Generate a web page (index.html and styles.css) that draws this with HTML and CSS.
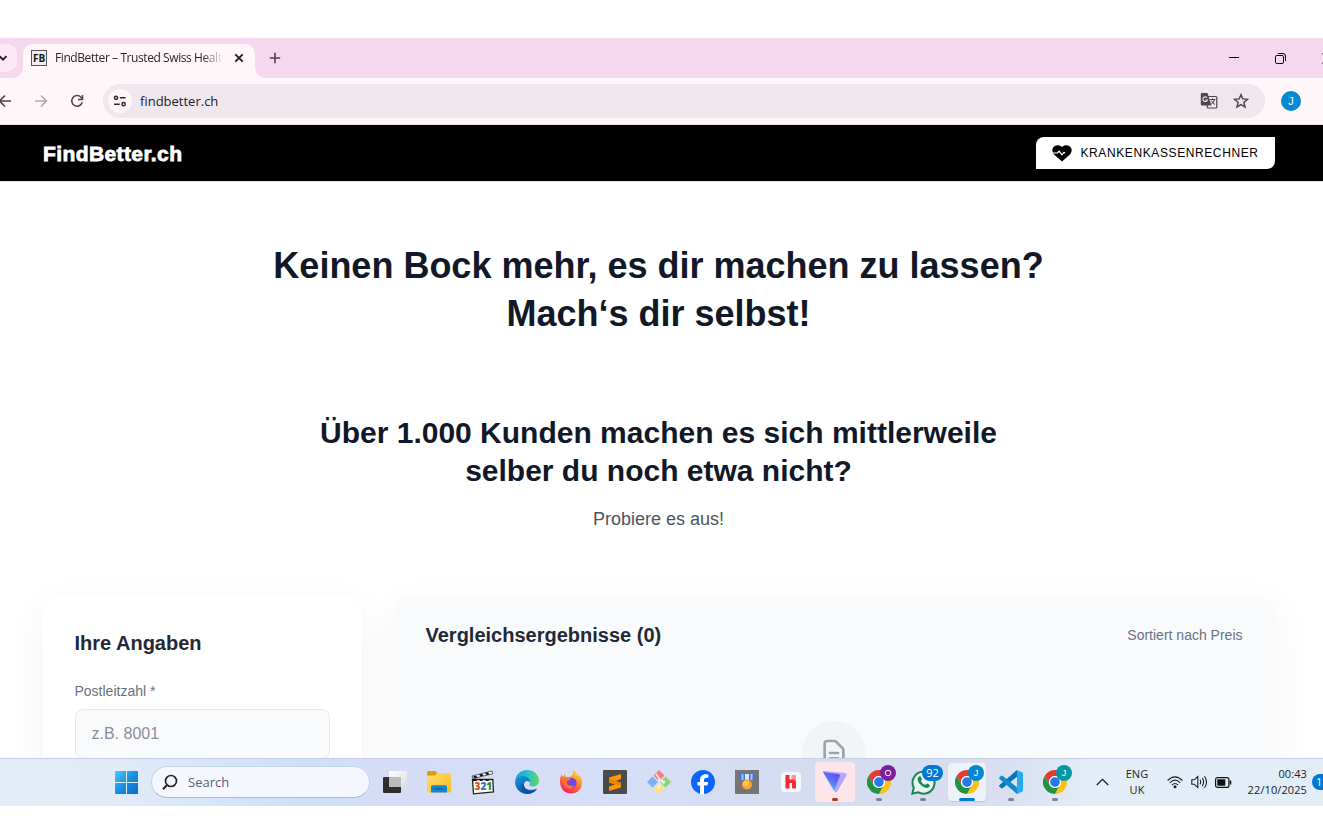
FILE: index.html
```html
<!DOCTYPE html>
<html lang="de">
<head>
<meta charset="utf-8">
<title>FindBetter – Trusted Swiss Health</title>
<link rel="stylesheet" href="styles.css">
</head>
<body>
<svg class="defs" width="0" height="0">
  <symbol id="chrome" viewBox="0 0 24 24">
    <path fill="#e33b2e" d="M1.6 6A12 12 0 0 1 22.4 6H12A6 6 0 0 0 6.8 15Z"/>
    <path fill="#229342" d="M1.6 6A12 12 0 0 0 12 24L17.2 15A6 6 0 0 1 6.8 15Z"/>
    <path fill="#fbc116" d="M12 24A12 12 0 0 0 22.4 6H12A6 6 0 0 1 17.2 15Z"/>
    <circle cx="12" cy="12" r="6" fill="#fff"/><circle cx="12" cy="12" r="4.8" fill="#2a78e8"/>
  </symbol>
</svg>
<div class="tabstrip">
  <div class="tab-search"><svg width="10" height="10" viewBox="0 0 10 10"><path d="M1.5 3.2 5 6.7l3.5-3.5" fill="none" stroke="#1f1a1f" stroke-width="1.8"/></svg></div>
  <div class="tab">
    <span class="favicon">FB</span>
    <span class="tab-title">FindBetter – Trusted Swiss Healt</span>
    <svg class="tab-close" width="10" height="10" viewBox="0 0 10 10"><path d="m1.3 1.3 7.4 7.4m0-7.4L1.3 8.7" stroke="#1f1a1f" stroke-width="1.8"/></svg>
  </div>
  <svg class="new-tab" width="12" height="12" viewBox="0 0 12 12"><path d="M6 .8v10.4M.8 6h10.4" stroke="#50404e" stroke-width="1.6"/></svg>
  <div class="window-buttons">
    <svg width="10" height="10" viewBox="0 0 10 10"><path d="M0 4.500h10" stroke="#000"/></svg>
    <svg width="11" height="11" viewBox="0 0 11 11"><rect x=".5" y="2.500" width="8" height="8" rx="1.300" fill="none" stroke="#000"/><path d="M2.800.5H8A2.500 2.500 0 0 1 10.500 3v5" fill="none" stroke="#000"/></svg>
    <svg width="11" height="11" viewBox="0 0 11 11"><path d="m.5.5 10 10m0-10-10 10" stroke="#000" stroke-width="1.100"/></svg>
  </div>
</div>
<div class="toolbar">
  <svg class="nav-back" width="14" height="14" viewBox="0 0 14 14"><path d="M13 7H2M7 1.500 1.500 7 7 12.500" fill="none" stroke="#57424f" stroke-width="1.600"/></svg>
  <svg class="nav-forward" width="14" height="14" viewBox="0 0 14 14"><path d="M1 7h11M7 1.500 12.500 7 7 12.500" fill="none" stroke="#b3a5ae" stroke-width="1.500"/></svg>
  <svg class="nav-reload" width="14" height="14" viewBox="0 0 14 14"><path d="M12.200 8.200A5.300 5.300 0 1 1 11 3.300L12.400 4.800" fill="none" stroke="#57424f" stroke-width="1.600"/><path d="M12.500 1v4.500H8" fill="none" stroke="#57424f" stroke-width="1.600"/></svg>
  <div class="omnibox">
    <span class="site-info"><svg width="14" height="12" viewBox="0 0 14 12"><g fill="none" stroke="#2d2630" stroke-width="1.500"><circle cx="3" cy="2.800" r="1.600"/><path d="M6.800 2.800H12.500M1 9.200h5.700"/><circle cx="10.600" cy="9.200" r="1.600"/></g></svg></span>
    <span class="url">findbetter.ch</span>
    <svg class="translate" width="18" height="18" viewBox="0 0 18 18"><rect x="7.200" y="4.500" width="9.600" height="11.500" rx="1" fill="none" stroke="#51454f" stroke-width="1.200"/><path d="M2 1h5.500L11.500 13.500H2A1.200 1.200 0 0 1 .8 12.300V2.200A1.200 1.200 0 0 1 2 1Z" fill="#51454f"/><path d="M7 5.700A2.300 2.300 0 1 0 7.400 8H5.400" fill="none" stroke="#f0e6ee" stroke-width="1.100"/><path d="M10 7.500h5.500M12.700 6.300v1.200M14.500 7.500q-.8 3-3.200 4.800M11.500 8.800q1 2.300 3.500 3.800" fill="none" stroke="#51454f"/></svg>
    <svg class="star" width="16" height="16" viewBox="0 0 16 16"><path d="m8 1.700 1.800 4.200 4.700.4-3.600 3.100 1.100 4.500L8 11.500l-4 2.400 1.100-4.500L1.500 6.300l4.700-.4Z" fill="none" stroke="#51454f" stroke-width="1.500"/></svg>
  </div>
  <span class="profile">J</span>
</div>
<header class="site-header">
  <span class="brand">FindBetter.ch</span>
  <span class="calculator">
    <svg width="20" height="17" viewBox="0 0 20 17"><path d="M10 16.500 2 9.500Q-.9 5.700 1.200 2.500C3.300-.3 7.500-.4 10 2 12.500-.4 16.700-.3 18.800 2.500Q20.900 5.700 18 9.500Z" fill="#000"/><path d="M0 8h5.200L7.200 6.200 10 9.800l1.700-2.100h1.500" fill="none" stroke="#fff" stroke-width="1.200"/></svg>
    KRANKENKASSENRECHNER
  </span>
</header>
<main class="page">
  <h1>Keinen Bock mehr, es dir machen zu lassen?<br>Mach‘s dir selbst!</h1>
  <h2>Über 1.000 Kunden machen es sich mittlerweile<br>selber du noch etwa nicht?</h2>
  <p class="lead">Probiere es aus!</p>
  <div class="columns">
    <section class="card form-card">
      <h3>Ihre Angaben</h3>
      <label>Postleitzahl *</label>
      <div class="field">z.B. 8001</div>
    </section>
    <section class="card results-card">
      <div class="results-head"><h3>Vergleichsergebnisse (0)</h3><span>Sortiert nach Preis</span></div>
      <div class="empty-icon"><svg width="32" height="32" viewBox="0 0 24 24" fill="none" stroke="#9ca3af" stroke-width="2" stroke-linecap="round" stroke-linejoin="round"><path d="M9 12h6m-6 4h6m2 5H7a2 2 0 0 1-2-2V5a2 2 0 0 1 2-2h5.586a1 1 0 0 1 .707.293l5.414 5.414a1 1 0 0 1 .293.707V19a2 2 0 0 1-2 2z"/></svg></div>
    </section>
  </div>
</main>
<div class="taskbar">
  <svg class="start" width="24" height="24" viewBox="0 0 24 24"><defs><linearGradient id="win" gradientUnits="userSpaceOnUse" x2="22" y2="22"><stop stop-color="#50d3fb"/><stop offset=".55" stop-color="#1a91e0"/><stop offset="1" stop-color="#0871cd"/></linearGradient></defs><path fill="url(#win)" d="M1.500 1H12v11H1V1.500ZM13 1h10.500l.5.500V12H13ZM1 13h11v11H1.500L1 23.500ZM13 13h11v10.500l-.5.500H13Z"/></svg>
  <div class="search"><svg width="16" height="17" viewBox="0 0 16 17"><circle cx="9" cy="7" r="5.500" fill="none" stroke="#25262b" stroke-width="1.700"/><path d="m5 11-4 4.300" stroke="#25262b" stroke-width="2"/></svg>Search</div>
  <div class="apps">
    <div class="app"><svg width="24" height="24" viewBox="0 0 24 24"><defs><linearGradient id="tv" x2="1" y2="1"><stop stop-color="#fff"/><stop offset="1" stop-color="#ddd"/></linearGradient></defs><rect y="7" width="18" height="16" rx="1" fill="#2e2e2e"/><rect x="6" y="1" width="18" height="16" rx="1" fill="url(#tv)"/><path d="M6 7h12v10H7l-1-1Z" fill="#b9bbbd"/></svg></div>
    <div class="app"><svg width="24" height="24" viewBox="0 0 24 24"><defs><linearGradient id="folder" x2="1" y2="1"><stop stop-color="#ffdf70"/><stop offset="1" stop-color="#f9b920"/></linearGradient></defs><path d="M0 2.500Q0 1 1.500 1H8l2.500 2L8 6H0Z" fill="#d99b08"/><path d="M0 5.500h8L11 3h11.500Q24 3 24 4.500V21q0 1.500-1.500 1.500h-21Q0 22.500 0 21Z" fill="url(#folder)"/><path d="M4 22.500V17q0-1.700 1.700-1.700h12.600Q20 15.300 20 17v5.500Z" fill="#1684d4"/><path d="M8 18.800h8" stroke="#0961aa" stroke-width="1.300"/></svg></div>
    <div class="app"><svg width="24" height="25" viewBox="0 0 24 25"><path d="M1.500 9.500h20.300L22.500 22l-20 1.800Z" fill="#fffef5" stroke="#222" stroke-width="1.300"/><path d="m1 6 20-5 .7 2.800L2 8.500Z" fill="#fff" stroke="#222" stroke-width=".7"/><path d="m2 6.500 3-1 1.500 2-3 .7ZM8 4.500l3-.8 1.500 2-3 .7ZM14 3l3-.8 1.500 2-3 .7ZM2 9h3l1 2H2ZM8 9h3l1 2H9ZM14 9h3l1 2h-3Z" fill="#111"/><g font-family="Open Sans,sans-serif" font-size="10" font-weight="800"><text x="3.500" y="20" fill="#db4b16">3</text><text x="9.400" y="20" fill="#2475c8">2</text><text x="15.200" y="20" fill="#278832">1</text></g></svg></div>
    <div class="app"><svg width="24" height="24" viewBox="0 0 24 24"><defs><linearGradient id="edgeTop" x2="1"><stop stop-color="#1b9de2"/><stop offset=".55" stop-color="#2bc3c9"/><stop offset="1" stop-color="#62d957"/></linearGradient><linearGradient id="edgeBlue" x2=".5" y2="1"><stop stop-color="#149bdc"/><stop offset="1" stop-color="#0b55a8"/></linearGradient></defs><path d="M.2 11C1 4 6 0 12 0c7 0 12 4.800 12 10.500 0 4-3 6-6.200 6-3 0-4-1-3.300-2.200 2-3-.5-6.300-4.500-6.300C5 8 1.500 9 .2 11Z" fill="url(#edgeTop)"/><path d="M.2 11C2 6 7.500 4.800 11 6.500c3 1.200 4.500 4 4 6-2-3-6-1.500-6 2 0 5 6.500 8 13 4.200C19.500 22.500 16 24 12 24 5 24-.6 18 .2 11Z" fill="url(#edgeBlue)"/><path d="M9 12.500c-2 6.500 5 9 13 6.200C19 23 15 24 12 24 6 22 4.500 16 9 12.500Z" fill="#104a9c" opacity=".65"/></svg></div>
    <div class="app"><svg width="24" height="24" viewBox="0 0 24 24"><defs><linearGradient id="fire" x1=".8" x2=".3" y2="1"><stop stop-color="#ffe132"/><stop offset=".45" stop-color="#ff8a28"/><stop offset="1" stop-color="#f21b69"/></linearGradient></defs><path d="M2.300 4.500 4 7l2-3 .5 3H10l3.500-2L14 0c3 1.500 4.500 3.500 5 6l1.300-1.500C26 13 22 23.500 12 23.500 3 23.500-1.500 14 2.300 4.500Z" fill="url(#fire)"/><circle cx="12.500" cy="13" r="5.200" fill="#7547db"/><path d="M4 8.500q4-2.500 8 .8l-3 1.500q-2 .7-1 3 2 3 7 1.700-2 4.500-7 2.500-5-2.500-4-9.500" fill="#ff712d"/></svg></div>
    <div class="app"><svg width="24" height="24" viewBox="0 0 24 24"><rect width="24" height="24" rx="1" fill="#4b4b49"/><path d="M18 4v5L12.500 11 18 12.700v4.800L6 21v-4.500l6-2-6-2V7.500Z" fill="#ff9800"/><path d="m6 8.500 12 4.200v3L6 12.500Z" fill="#e88400"/></svg></div>
    <div class="app"><svg width="24" height="24" viewBox="0 0 24 24"><path d="m12 0 5.500 5.500L12 11 6.500 5.500Z" fill="#ff7d7d"/><path d="m18.500 6.500 5.500 5.500-5.500 5.500L13 12Z" fill="#8bd66a"/><path d="m12 13 5.500 5.500L12 24l-5.500-5.500Z" fill="#ffe279"/><path d="M5.500 6.500 11 12l-5.500 5.500L0 12Z" fill="#7db0fc"/><path d="m9 4 3 4v9m0-8 4 3" fill="none" stroke="#eee" stroke-width="1.600"/><circle cx="12" cy="17" r="1.800" fill="#eee"/><circle cx="16.500" cy="12" r="1.800" fill="#eee"/></svg></div>
    <div class="app"><svg width="24" height="24" viewBox="0 0 24 24"><circle cx="12" cy="12" r="12" fill="#0866ff"/><path d="M9 24v-8.500H6.500V12H9v-1.500C9 6.300 11 4.200 14.700 4.200q1.500 0 2.700.4v3.200h-1.800c-2 0-2.600.8-2.600 2.700V12h4.200l-.8 3.500H13V24Z" fill="#fff"/></svg></div>
    <div class="app"><svg width="24" height="24" viewBox="0 0 24 24"><path fill="#747574" d="M0 0h24v24H0z"/><path d="M4.500 4h15v5L17 10H7L4.500 9Z" fill="#3978e8"/><path d="M7.500 4v6m9-6v6" stroke="#9fc6ff" stroke-width="2"/><path d="M10 4h4v6h-4Z" fill="#dce6f7"/><circle cx="12" cy="14.500" r="5" fill="#f6a536"/><circle cx="11" cy="13.500" r="2.800" fill="#ffc654"/></svg></div>
    <div class="app"><svg width="24" height="24" viewBox="0 0 24 24"><rect x="2" y="2" width="20" height="20" rx="4" fill="#f8f7f8"/><path d="M6.500 5h4v13.500h-4Z" fill="#f22b35"/><path d="M12.500 5h4.500v5.500h-4.500Z" fill="#ff9696"/><path d="M10 9.500h4q3 0 3 3v6h-4V13h-3Z" fill="#f22b35"/></svg></div>
    <div class="app alert"><svg width="24" height="24" viewBox="0 0 24 24"><defs><linearGradient id="vpn" x1="1" x2=".3" y2="1"><stop stop-color="#6842e8"/><stop offset=".55" stop-color="#5b74f7"/><stop offset="1" stop-color="#55e8e4"/></linearGradient></defs><path d="M0 1.800Q0 1 1 1l21 2q2.500.3 1.500 2.500l-9 15.500q-1.500 2.500-3 0Z" fill="#b8a3f8"/><path d="m0 2 15 2q3 .5 1.500 3L11 21Z" fill="url(#vpn)"/></svg><i class="run red"></i></div>
    <div class="app"><svg width="24" height="24"><use href="#chrome"/></svg><b class="badge purple">O</b><i class="run"></i></div>
    <div class="app"><svg width="25" height="25" viewBox="0 0 25 25"><path d="m1.300 23.700 1.500-5.900A11 11 0 1 1 7 22.200Z" fill="#e9f3f3" stroke="#198754" stroke-width="2"/><path d="M8 6.500c-3 2.500-.5 6.500 2.500 9s6.500 3.500 8 1c.7-1.200.2-1.800-.8-2.300l-1.800-.8-1.700 1.600c-1.700-.5-3.500-2-4.300-3.900L11 9.500 9.800 6.800Q9.300 5.700 8 6.500Z" fill="#198754"/></svg><b class="badge count">92</b><i class="run"></i></div>
    <div class="app active"><svg width="24" height="24"><use href="#chrome"/></svg><b class="badge blue">J</b><i class="run wide"></i></div>
    <div class="app"><svg width="24" height="24" viewBox="0 0 24 24"><path d="m18 0 6 2.700v18.600L18 24Z" fill="#29a9ee"/><path d="M18 0v6.800L3.500 18.200Q2.800 18.700 2 18l-1.700-1.500Q-.3 16 .3 15.300Z" fill="#0877b9"/><path d="M18 24v-6.800L3.500 5.800Q2.800 5.300 2 6L.3 7.500Q-.3 8 .3 8.700Z" fill="#108bd0"/></svg><i class="run"></i></div>
    <div class="app"><svg width="24" height="24"><use href="#chrome"/></svg><b class="badge teal">J</b><i class="run"></i></div>
  </div>
  <div class="tray">
    <svg class="chevron" width="13" height="8" viewBox="0 0 13 8"><path d="m.8 7 5.700-5.700L12.200 7" fill="none" stroke="#1c1c1e" stroke-width="1.300"/></svg>
    <div class="lang">ENG<br>UK</div>
    <svg class="wifi" width="16" height="13" viewBox="0 0 16 13"><g fill="none" stroke="#1c1c1e" stroke-width="1.100"><path d="M.6 4.500Q8-2.700 15.400 4.500M2.800 6.800Q8 1.500 13.200 6.800M5 9Q8 6 11 9"/></g><circle cx="8" cy="10.800" r="1.500" fill="#1c1c1e"/></svg>
    <svg class="volume" width="17" height="14" viewBox="0 0 17 14"><g fill="none" stroke="#1c1c1e" stroke-width="1.100"><path d="M.8 4.800h2.400L6.800 1.500v11L3.200 9.200H.8ZM9 4.800q1.400 2.200 0 4.400M11.300 3q2.600 4 0 8M13.500 1.200q4 5.800 0 11.600"/></g></svg>
    <svg class="battery" width="17" height="11" viewBox="0 0 17 11"><rect x=".6" y=".6" width="13.300" height="9.800" rx="2" fill="none" stroke="#111" stroke-width="1.200"/><rect x="2.300" y="2.300" width="8" height="6.400" fill="#111"/><path d="M15.500 3.500v4" stroke="#111" stroke-width="1.500"/></svg>
    <div class="clock">00:43<br>22/10/2025</div>
    <span class="notice">18</span>
  </div>
</div>
</body>
</html>
```
FILE: styles.css
```css
* { box-sizing: border-box; }
body { margin: 0; padding-top: 38px; width: 1323px; height: 827px; overflow: hidden; background: #fff; font-family: "Liberation Sans", Arial, sans-serif; }
svg { display: block; flex: none; }
.defs { position: absolute; }
h1, h2, h3, p { margin: 0; }

.tabstrip { height: 40px; background: #f6d8ee; display: flex; align-items: center; font-family: "Open Sans", sans-serif; }
.tab-search { width: 17px; height: 28px; background: #fde9f6; border-radius: 0 10px 10px 0; display: flex; align-items: center; margin-right: 6px; }
.tab-search svg { margin-left: -2px; }
.tab { position: relative; width: 232px; height: 34px; align-self: flex-end; background: #fff6fa; border-radius: 10px 10px 0 0; display: flex; align-items: center; padding: 0 11px 6px 8px; }
.tab::before, .tab::after { content: ""; position: absolute; bottom: 0; width: 10px; height: 10px; }
.tab::before { left: -10px; background: radial-gradient(circle at 0 0, #f6d8ee 9.5px, #fff6fa 10px); }
.tab::after { right: -10px; background: radial-gradient(circle at 100% 0, #f6d8ee 9.5px, #fff6fa 10px); }
.favicon { width: 16px; height: 16px; border: 1px solid #555; background: #eee; font: 700 10px/14px "Open Sans", sans-serif; letter-spacing: -.2px; text-align: center; color: #151515; }
.tab-title { width: 168px; margin-left: 8px; white-space: nowrap; font-size: 12px; line-height: 18px; letter-spacing: -.42px; color: #2a252a; -webkit-mask-image: linear-gradient(90deg, #000 88%, transparent); mask-image: linear-gradient(90deg, #000 88%, transparent); }
.tab-close { margin-left: auto; }
.new-tab { margin-left: 14px; }
.window-buttons { display: flex; align-items: center; gap: 36px; margin-left: auto; margin-right: -10px; }

.toolbar { height: 47px; background: #fff6fa; border-bottom: 1px solid #e9dfe5; display: flex; align-items: center; }
.nav-back { margin-left: -2px; }
.nav-forward { margin-left: 22px; }
.nav-reload { margin-left: 22px; }
.omnibox { width: 1162px; height: 34px; border-radius: 17px; background: #f0e6ee; margin-left: 19px; display: flex; align-items: center; padding: 0 16px 0 5px; }
.site-info { width: 24px; height: 24px; border-radius: 50%; background: #fff6fa; display: flex; align-items: center; justify-content: center; }
.url { margin-left: 8px; font: 13px "Open Sans", sans-serif; color: #211b2b; }
.translate { margin-left: auto; }
.star { margin-left: 15px; }
.profile { width: 20px; height: 20px; border-radius: 50%; background: #048ad3; color: #fff; font: 11px/20px "Liberation Sans", sans-serif; text-align: center; margin-left: 16px; }

.site-header { height: 56px; background: #000; padding: 0 48px 0 43px; display: flex; align-items: center; justify-content: space-between; }
.brand { color: #fff; font-size: 21px; font-weight: 700; letter-spacing: .4px; -webkit-text-stroke: .8px #fff; padding-top: 1px; }
.calculator { width: 239px; height: 32px; background: #fff; color: #000; border-radius: 8px 0 8px 0; display: flex; align-items: center; gap: 8.5px; padding-left: 16px; font-size: 12px; letter-spacing: .6px; white-space: nowrap; }

.page { height: 577px; overflow: hidden; border-top: 1px solid #e5e7eb; padding: 60px 48.5px 0 42.5px; color: #111827; }
h1 { font-size: 36px; line-height: 48px; text-align: center; }
h2 { font-size: 30px; line-height: 38px; text-align: center; margin-top: 76px; }
.lead { font-size: 18px; line-height: 28px; text-align: center; color: #4b5563; margin-top: 15px; }
.columns { display: flex; gap: 32px; margin-top: 64px; }
.card { height: 500px; border-radius: 18px; padding: 32px; box-shadow: 0 10px 40px rgba(0, 0, 0, .05); }
.form-card { width: 319px; background: #fff; }
.results-card { flex: 1; background: #f9fafc; }
h3 { font-size: 20px; line-height: 28px; color: #1f2937; }
label { display: block; margin-top: 24px; font-size: 14px; line-height: 20px; color: #6b7280; }
.field { height: 50px; margin-top: 8px; border: 1px solid #e5e7eb; border-radius: 8px; background: #f9fafc; padding: 0 16px; font-size: 16px; line-height: 48px; color: #8b8e96; }
.results-card { padding-top: 24px; }
.results-head { display: flex; align-items: center; justify-content: space-between; font-size: 14px; color: #6b7280; }
.empty-icon { width: 64px; height: 64px; margin: 72px auto 0; border-radius: 50%; background: #f3f4f6; display: flex; align-items: center; justify-content: center; }

.taskbar { position: relative; height: 48px; border-top: 1px solid #c4d0e6; padding-bottom: 1px; display: flex; align-items: center; overflow: hidden; background: linear-gradient(90deg, #e2edf8 0, #e0ebf7 120px, #cfdff9 300px, #d6dcf5 400px, #d5dff7 600px, #d5dcef 850px, #d9def0 1000px, #e2edf8 1090px); font-family: "Open Sans", sans-serif; }
.start { margin-left: 114px; }
.search { flex: none; width: 219px; height: 32px; margin-left: 13px; border: 1px solid #c8d4e8; border-bottom-color: #aeb9cd; border-radius: 16px; background: #f4f8fe; display: flex; align-items: center; gap: 10px; padding-left: 10px; font-size: 13px; color: #5d6068; }
.apps { display: flex; margin-left: 5px; }
.app { position: relative; width: 40px; height: 40px; margin: 0 2px; border-radius: 4px; display: flex; align-items: center; justify-content: center; flex: none; }
.app:first-child { margin-left: 0; }
.alert { background: #fce6e9; }
.active { background: #edf1f9; box-shadow: 0 1px 1px #bfc5d6; width: 38px; height: 38px; margin: 1px 3px; }
.run { position: absolute; bottom: 1px; left: 17px; width: 6px; height: 3px; border-radius: 2px; background: #7e828c; }
.run.red { background: #c42b1c; }
.run.wide { left: 11px; width: 16px; background: #0078d4; bottom: 0; }
.badge { position: absolute; top: 3px; right: 3px; width: 16px; height: 16px; border-radius: 8px; color: #fff; font: 400 9px/16px "Liberation Sans", sans-serif; text-align: center; }
.active .badge { top: 2px; right: 2px; }
.purple { background: #7b1fa2; }
.blue { background: #0288d1; }
.teal { background: #0097a7; }
.badge.count { width: 21px; right: 0; background: #0078d4; font: 400 11px/16px "Open Sans", sans-serif; }
.tray { flex: 1; display: flex; align-items: center; color: #222; font-size: 11px; line-height: 16px; letter-spacing: .1px; margin-left: 19px; }
.lang { flex: none; margin-left: 13px; width: 30px; text-align: center; }
.wifi { margin-left: 15px; }
.volume { margin-left: 8px; }
.battery { margin-left: 7px; }
.clock { flex: none; width: 64px; text-align: right; margin-left: 11px; white-space: nowrap; }
.notice { flex: none; width: 22px; height: 16px; margin-left: 5px; border-radius: 8px; background: #0078d4; color: #fff; text-align: left; padding-left: 4px; }
```
